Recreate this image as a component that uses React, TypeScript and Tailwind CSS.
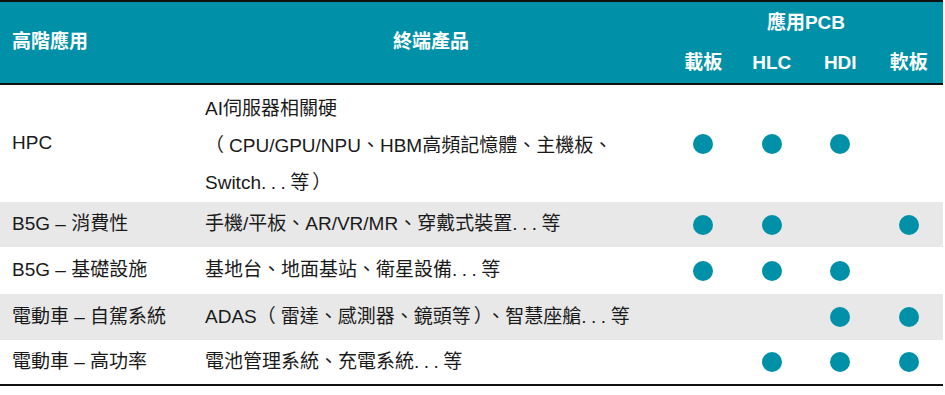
import React from "react";

const E = () => <span className="tracking-[4.5px]">...</span>;
const L = () => <span className="mr-[5px]">（</span>;
const R = () => <span className="mx-[3px]">）</span>;

const rows: { app: string; product: React.ReactNode; dots: boolean[]; gray: boolean; tall?: boolean }[] = [
  {
    app: "HPC",
    product: (
      <>
        <div>AI伺服器相關硬</div>
        <div>
          <L />CPU/GPU/NPU、HBM高頻記憶體、主機板、
        </div>
        <div>
          Switch<E />等<R />
        </div>
      </>
    ),
    dots: [true, true, true, false],
    gray: false,
    tall: true,
  },
  {
    app: "B5G – 消費性",
    product: (
      <span>
        手機/平板、AR/VR/MR、穿戴式裝置<E />等
      </span>
    ),
    dots: [true, true, false, true],
    gray: true,
  },
  {
    app: "B5G – 基礎設施",
    product: (
      <span>
        基地台、地面基站、衛星設備<E />等
      </span>
    ),
    dots: [true, true, true, false],
    gray: false,
  },
  {
    app: "電動車 – 自駕系統",
    product: (
      <span>
        ADAS<L />雷達、感測器、鏡頭等<R />、智慧座艙<E />等
      </span>
    ),
    dots: [false, false, true, true],
    gray: true,
  },
  {
    app: "電動車 – 高功率",
    product: (
      <span>
        電池管理系統、充電系統<E />等
      </span>
    ),
    dots: [false, true, true, true],
    gray: false,
  },
];

const heights = ["h-[117px]", "h-[45px]", "h-[47px]", "h-[46px]", "h-[44px]"];

export default function App() {
  return (
    <div
      className="w-[945px] h-[395px] bg-white text-[19px] text-[#1a1a1a]"
      style={{ fontFamily: '"Liberation Sans", "Noto Sans CJK TC", sans-serif' }}
    >
      <div className="w-[943px]">
        {/* Header */}
        <div className="border-t-2 border-b-2 border-[#111] bg-[#0091a9] text-white font-bold grid grid-cols-[193px_476px_repeat(4,68.5px)] grid-rows-[41px_40px]">
          <div className="row-span-2 flex items-center pl-[12px]">高階應用</div>
          <div className="row-span-2 flex items-center justify-center">終端產品</div>
          <div className="col-span-4 flex items-center justify-center pt-[1px]">應用PCB</div>
          <div className="flex items-center justify-center">載板</div>
          <div className="flex items-center justify-center">HLC</div>
          <div className="flex items-center justify-center">HDI</div>
          <div className="flex items-center justify-center">軟板</div>
        </div>
        {/* Body */}
        <div className="border-b-2 border-[#111]">
          {rows.map((r, i) => (
            <div
              key={i}
              className={`grid grid-cols-[193px_476px_repeat(4,68.5px)] ${heights[i]} ${r.gray ? "bg-[#e8e8e8]" : "bg-white"}`}
            >
              <div className="flex items-center pl-[12px]">{r.app}</div>
              <div className={`flex flex-col justify-center pl-[12px] ${r.tall ? "leading-[37px] pt-[3px]" : ""}`}>
                {r.product}
              </div>
              {r.dots.map((d, j) => (
                <div key={j} className="flex items-center justify-center">
                  {d && <div className="w-[20px] h-[20px] rounded-full bg-[#0091a9]" />}
                </div>
              ))}
            </div>
          ))}
        </div>
      </div>
    </div>
  );
}
